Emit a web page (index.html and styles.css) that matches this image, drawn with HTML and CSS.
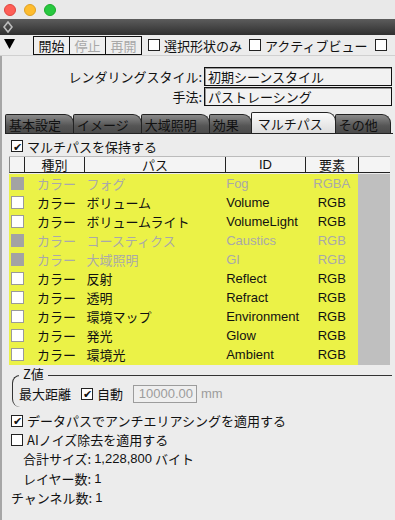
FILE: index.html
```html
<!DOCTYPE html>
<html lang="ja">
<head>
<meta charset="utf-8">
<link rel="stylesheet" href="styles.css">
</head>
<body>
<div class="win">
  <div class="titlebar">
    <span class="light red"></span><span class="light yellow"></span><span class="light green"></span>
  </div>
  <div class="darkbar">
    <svg width="10" height="12" viewBox="0 0 10 12"><path d="M5 1 L9 6 L5 11 L1 6 Z" fill="none" stroke="#bdbdbd" stroke-width="1.6"/></svg>
  </div>
  <div class="toolbar">
    <svg class="tri" width="11" height="10" viewBox="0 0 11 10"><path d="M0 0 H11 L5.5 10 Z" fill="#000"/></svg>
    <div class="btns">
      <span class="btn">開始</span><span class="btn dis">停止</span><span class="btn dis">再開</span>
    </div>
    <span class="cb"></span><span class="tl">選択形状のみ</span>
    <span class="cb"></span><span class="tl">アクティブビュー</span>
    <span class="cb"></span>
  </div>
  <div class="panel">
    <div class="formrow"><span class="flabel">レンダリングスタイル:</span><span class="sel">初期シーンスタイル</span></div>
    <div class="formrow"><span class="flabel">手法:</span><span class="sel">パストレーシング</span></div>
    <div class="tabs">
      <span class="tab">基本設定</span><span class="tab">イメージ</span><span class="tab">大域照明</span><span class="tab">効果</span><span class="tab active">マルチパス</span><span class="tab">その他</span>
    </div>
    <div class="chkrow top"><span class="cb on">✔</span><span>マルチパスを保持する</span></div>
    <div class="table">
      <div class="hrow">
        <span class="h c0"></span><span class="h c1">種別</span><span class="h c2">パス</span><span class="h c3">ID</span><span class="h c4">要素</span><span class="h c5"></span>
      </div>
      <div class="body">
        <div class="rows">
          <div class="row dim"><span class="rcb"></span><span class="k">カラー</span><span class="p">フォグ</span><span class="i">Fog</span><span class="e">RGBA</span></div>
          <div class="row"><span class="rcb"></span><span class="k">カラー</span><span class="p">ボリューム</span><span class="i">Volume</span><span class="e">RGB</span></div>
          <div class="row"><span class="rcb"></span><span class="k">カラー</span><span class="p">ボリュームライト</span><span class="i">VolumeLight</span><span class="e">RGB</span></div>
          <div class="row dim"><span class="rcb"></span><span class="k">カラー</span><span class="p">コースティクス</span><span class="i">Caustics</span><span class="e">RGB</span></div>
          <div class="row dim"><span class="rcb"></span><span class="k">カラー</span><span class="p">大域照明</span><span class="i">GI</span><span class="e">RGB</span></div>
          <div class="row"><span class="rcb"></span><span class="k">カラー</span><span class="p">反射</span><span class="i">Reflect</span><span class="e">RGB</span></div>
          <div class="row"><span class="rcb"></span><span class="k">カラー</span><span class="p">透明</span><span class="i">Refract</span><span class="e">RGB</span></div>
          <div class="row"><span class="rcb"></span><span class="k">カラー</span><span class="p">環境マップ</span><span class="i">Environment</span><span class="e">RGB</span></div>
          <div class="row"><span class="rcb"></span><span class="k">カラー</span><span class="p">発光</span><span class="i">Glow</span><span class="e">RGB</span></div>
          <div class="row"><span class="rcb"></span><span class="k">カラー</span><span class="p">環境光</span><span class="i">Ambient</span><span class="e">RGB</span></div>
        </div>
        <div class="gutter"></div>
      </div>
    </div>
    <div class="group">
      <span class="legend">Z値</span>
      <div class="grow">
        <span>最大距離</span>
        <span class="cb on">✔</span><span>自動</span>
        <span class="num">10000.00</span><span class="mm">mm</span>
      </div>
    </div>
    <div class="chkrow after"><span class="cb on">✔</span><span>データパスでアンチエリアシングを適用する</span></div>
    <div class="chkrow"><span class="cb"></span><span>AIノイズ除去を適用する</span></div>
    <div class="info ind">合計サイズ: <span class="lat">1,228,800</span> バイト</div>
    <div class="info ind">レイヤー数: <span class="lat">1</span></div>
    <div class="info">チャンネル数: <span class="lat">1</span></div>
  </div>
</div>
</body>
</html>
```
FILE: styles.css
```css
* { box-sizing: border-box; }
html, body { margin: 0; padding: 0; }
body {
  width: 395px; height: 520px; overflow: hidden;
  background: #ececec;
  font-family: "Noto Sans CJK JP", sans-serif;
  font-size: 13px; color: #111;
}
.win { display: flex; flex-direction: column; }
.titlebar {
  height: 19px; display: flex; align-items: center; gap: 8px; padding-left: 4px;
  background: #e9e9e9;
}
.light { width: 12px; height: 12px; border-radius: 50%; display: inline-block; }
.red { background: #fe5f57; border: 0.5px solid #e0443e; }
.yellow { background: #febc2e; border: 0.5px solid #dea123; }
.green { background: #28c840; border: 0.5px solid #1aab29; }
.darkbar {
  height: 16px; background: linear-gradient(#5c5c5c, #2f2f2f);
  display: flex; align-items: center; padding-left: 3px;
}
.toolbar {
  height: 21px; display: flex; align-items: center; padding-left: 4px;
  white-space: nowrap; overflow: hidden;
  border-bottom: 1px solid #d0d0d0;
}
.tri { margin-right: 18px; margin-top: -3px; flex: none; }
.btns { display: flex; margin-right: 7px; }
.btn {
  height: 19px; width: 37px; border: 1.5px solid #111; margin-right: -1px;
  display: flex; align-items: center; justify-content: center;
  background: #efefef; font-size: 13px; line-height: 1;
}
.btn.dis { color: #a8a8a8; }
.cb {
  width: 12px; height: 12px; border: 1px solid #222; background: #fff;
  display: inline-flex; align-items: center; justify-content: center;
  font-size: 11px; line-height: 1; color: #111; flex: none;
}
.tl { margin: 0 7px 0 4px; }
.panel {
  border-left: 2px solid #a6a6a6; display: flex; flex-direction: column;
  padding-top: 10px; height: 465px;
}
.formrow { display: flex; align-items: center; height: 20px; }
.flabel { width: 202px; text-align: right; padding-right: 2px; }
.sel {
  width: 188px; height: 19px; border: 1.5px solid #111; background: #f2f2f2;
  display: flex; align-items: center; padding-left: 3px; line-height: 1;
  box-shadow: inset 1px 1px 0 #999;
}
.tabs {
  display: flex; margin-top: 8px; margin-left: 3px; height: 20px; align-items: flex-end;
  border-bottom: 1px solid #222; width: 388px;
}
.tab {
  height: 19px; padding: 0 12px 0 3px; display: flex; align-items: center;
  background: linear-gradient(#8a8a8a, #555 60%, #4a4a4a);
  color: #111; border: 1px solid #222; border-bottom: none;
  border-radius: 2px 9px 0 0; line-height: 1; margin-right: -1px;
  font-size: 13px;
}
.tab.active {
  height: 21px; background: linear-gradient(#fafafa, #dcdcdc);
  padding: 0 12px 0 6px;
}
.chkrow { display: flex; align-items: center; gap: 4px; height: 19px; padding-left: 9px; }
.chkrow.top { margin-top: 2px; height: 20px; }
.table { margin-left: 7px; width: 381px; display: flex; flex-direction: column; }
.hrow { display: flex; height: 17px; background: #f4f4f4; border-top: 1px solid #bbb; }
.h {
  border-left: 1px solid #222; border-bottom: 1px solid #222;
  display: flex; align-items: center; justify-content: center; line-height: 1;
  font-size: 13px;
}
.c0 { width: 15px; border-left: 1px solid #888; }
.c1 { width: 60px; }
.c2 { width: 141px; }
.c3 { width: 80px; font-family: "Liberation Sans", sans-serif; }
.c4 { width: 53px; }
.c5 { flex: 1; }
.body { display: flex; margin-top: 1px; }
.rows { width: 349px; background: #ebf247; padding-top: 0; padding-bottom: 1px; }
.gutter { flex: 1; background: #bfbfbf; }
.row { display: flex; align-items: center; height: 19px; }
.rcb {
  width: 13px; height: 13px; border: 1px solid #9a9a9a; background: #fff;
  margin-left: 2px; margin-right: 13px;
}
.row.dim .rcb { background: #a3a3a3; border-color: #a3a3a3; }
.row.dim { color: #a9a9a9; }
.k { width: 50px; }
.p { width: 141px; }
.i { width: 80px; font-family: "Liberation Sans", sans-serif; }
.e { width: 53px; text-align: center; font-family: "Liberation Sans", sans-serif; }
.group {
  margin: 10px 0 0 10px; height: 32px; position: relative;
  border-left: 1px solid #333; border-top: 1px solid #333;
  border-radius: 8px 0 0 8px; width: 380px;
}
.legend {
  position: absolute; left: 6px; top: -10px; background: #ececec; padding: 0 4px; line-height: 1.3;
}
.grow { display: flex; align-items: center; gap: 4px; padding: 8px 0 0 6px; }
.grow .cb { margin-left: 6px; }
.num {
  margin-left: 6px; width: 64px; height: 18px; border: 1px solid #9c9c9c; background: #efefef;
  color: #9c9c9c; font-family: "Liberation Sans", sans-serif; font-size: 13px;
  display: flex; align-items: center; justify-content: flex-end; padding-right: 3px;
}
.mm { color: #9c9c9c; font-family: "Liberation Sans", sans-serif; }
.chkrow.after { margin-top: 4px; }
.info { height: 19.5px; display: flex; align-items: center; padding-left: 9px; white-space: pre; }
.info.ind { padding-left: 21px; }
.lat { font-family: "Liberation Sans", sans-serif; }
```
